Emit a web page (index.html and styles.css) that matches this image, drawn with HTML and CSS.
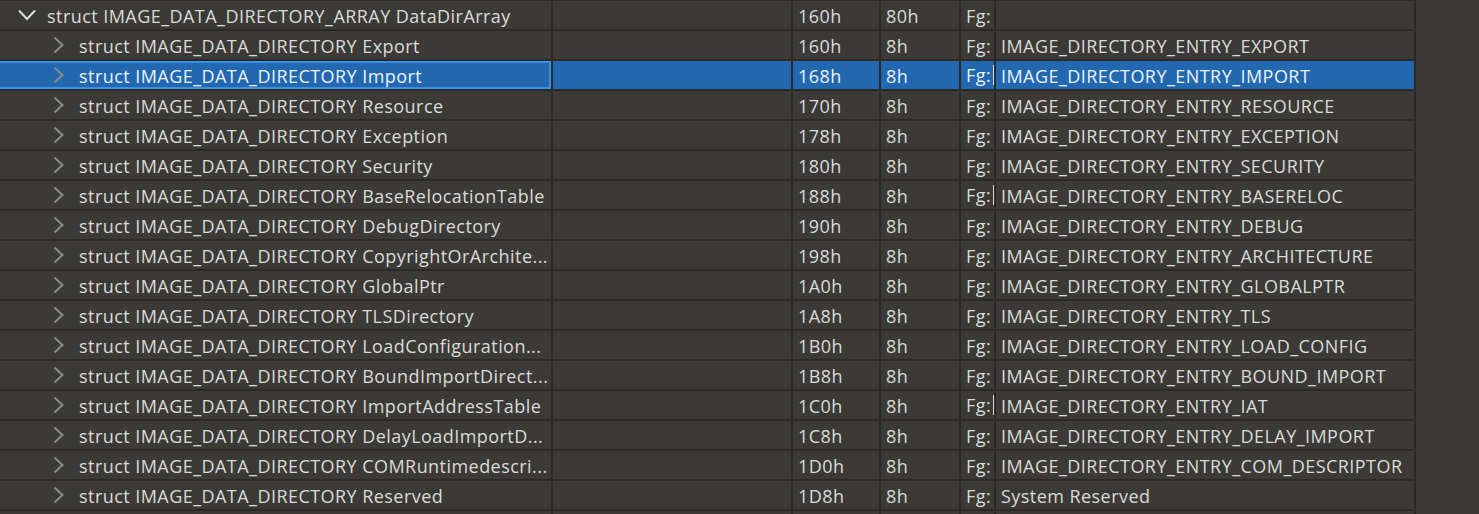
FILE: index.html
```html
<!DOCTYPE html>
<html>
<head>
<meta charset="utf-8">
<link rel="stylesheet" href="styles.css">
</head>
<body>
<div class="tree">
  <div class="row">
    <div class="cell name l0"><svg class="chev down" viewBox="0 0 18 12"><polyline points="1,1.5 9,10 17,1.5"/></svg><span class="txt">struct IMAGE_DATA_DIRECTORY_ARRAY DataDirArray</span></div>
    <div class="cell"></div><div class="cell">160h</div><div class="cell">80h</div><div class="cell">Fg:</div><div class="cell"></div>
  </div>
  <div class="row">
    <div class="cell name l1"><svg class="chev" viewBox="0 0 18 18"><polyline points="4.5,1.5 12.5,9 4.5,16.5"/></svg><span class="txt">struct IMAGE_DATA_DIRECTORY Export</span></div>
    <div class="cell"></div><div class="cell">160h</div><div class="cell">8h</div><div class="cell">Fg:</div><div class="cell">IMAGE_DIRECTORY_ENTRY_EXPORT</div>
  </div>
  <div class="row sel">
    <div class="cell name l1 focus"><svg class="chev" viewBox="0 0 18 18"><polyline points="4.5,1.5 12.5,9 4.5,16.5"/></svg><span class="txt">struct IMAGE_DATA_DIRECTORY Import</span></div>
    <div class="cell"></div><div class="cell">168h</div><div class="cell">8h</div><div class="cell fg">Fg:<span class="caret"></span></div><div class="cell">IMAGE_DIRECTORY_ENTRY_IMPORT</div>
  </div>
  <div class="row">
    <div class="cell name l1"><svg class="chev" viewBox="0 0 18 18"><polyline points="4.5,1.5 12.5,9 4.5,16.5"/></svg><span class="txt">struct IMAGE_DATA_DIRECTORY Resource</span></div>
    <div class="cell"></div><div class="cell">170h</div><div class="cell">8h</div><div class="cell">Fg:</div><div class="cell">IMAGE_DIRECTORY_ENTRY_RESOURCE</div>
  </div>
  <div class="row">
    <div class="cell name l1"><svg class="chev" viewBox="0 0 18 18"><polyline points="4.5,1.5 12.5,9 4.5,16.5"/></svg><span class="txt">struct IMAGE_DATA_DIRECTORY Exception</span></div>
    <div class="cell"></div><div class="cell">178h</div><div class="cell">8h</div><div class="cell">Fg:</div><div class="cell">IMAGE_DIRECTORY_ENTRY_EXCEPTION</div>
  </div>
  <div class="row">
    <div class="cell name l1"><svg class="chev" viewBox="0 0 18 18"><polyline points="4.5,1.5 12.5,9 4.5,16.5"/></svg><span class="txt">struct IMAGE_DATA_DIRECTORY Security</span></div>
    <div class="cell"></div><div class="cell">180h</div><div class="cell">8h</div><div class="cell">Fg:</div><div class="cell">IMAGE_DIRECTORY_ENTRY_SECURITY</div>
  </div>
  <div class="row">
    <div class="cell name l1"><svg class="chev" viewBox="0 0 18 18"><polyline points="4.5,1.5 12.5,9 4.5,16.5"/></svg><span class="txt">struct IMAGE_DATA_DIRECTORY BaseRelocationTable</span></div>
    <div class="cell"></div><div class="cell">188h</div><div class="cell">8h</div><div class="cell fg">Fg:<span class="caret"></span></div><div class="cell">IMAGE_DIRECTORY_ENTRY_BASERELOC</div>
  </div>
  <div class="row">
    <div class="cell name l1"><svg class="chev" viewBox="0 0 18 18"><polyline points="4.5,1.5 12.5,9 4.5,16.5"/></svg><span class="txt">struct IMAGE_DATA_DIRECTORY DebugDirectory</span></div>
    <div class="cell"></div><div class="cell">190h</div><div class="cell">8h</div><div class="cell">Fg:</div><div class="cell">IMAGE_DIRECTORY_ENTRY_DEBUG</div>
  </div>
  <div class="row">
    <div class="cell name l1"><svg class="chev" viewBox="0 0 18 18"><polyline points="4.5,1.5 12.5,9 4.5,16.5"/></svg><span class="txt">struct IMAGE_DATA_DIRECTORY CopyrightOrArchite...</span></div>
    <div class="cell"></div><div class="cell">198h</div><div class="cell">8h</div><div class="cell">Fg:</div><div class="cell">IMAGE_DIRECTORY_ENTRY_ARCHITECTURE</div>
  </div>
  <div class="row">
    <div class="cell name l1"><svg class="chev" viewBox="0 0 18 18"><polyline points="4.5,1.5 12.5,9 4.5,16.5"/></svg><span class="txt">struct IMAGE_DATA_DIRECTORY GlobalPtr</span></div>
    <div class="cell"></div><div class="cell">1A0h</div><div class="cell">8h</div><div class="cell">Fg:</div><div class="cell">IMAGE_DIRECTORY_ENTRY_GLOBALPTR</div>
  </div>
  <div class="row">
    <div class="cell name l1"><svg class="chev" viewBox="0 0 18 18"><polyline points="4.5,1.5 12.5,9 4.5,16.5"/></svg><span class="txt">struct IMAGE_DATA_DIRECTORY TLSDirectory</span></div>
    <div class="cell"></div><div class="cell">1A8h</div><div class="cell">8h</div><div class="cell">Fg:</div><div class="cell">IMAGE_DIRECTORY_ENTRY_TLS</div>
  </div>
  <div class="row">
    <div class="cell name l1"><svg class="chev" viewBox="0 0 18 18"><polyline points="4.5,1.5 12.5,9 4.5,16.5"/></svg><span class="txt">struct IMAGE_DATA_DIRECTORY LoadConfiguration...</span></div>
    <div class="cell"></div><div class="cell">1B0h</div><div class="cell">8h</div><div class="cell">Fg:</div><div class="cell">IMAGE_DIRECTORY_ENTRY_LOAD_CONFIG</div>
  </div>
  <div class="row">
    <div class="cell name l1"><svg class="chev" viewBox="0 0 18 18"><polyline points="4.5,1.5 12.5,9 4.5,16.5"/></svg><span class="txt">struct IMAGE_DATA_DIRECTORY BoundImportDirect...</span></div>
    <div class="cell"></div><div class="cell">1B8h</div><div class="cell">8h</div><div class="cell">Fg:</div><div class="cell">IMAGE_DIRECTORY_ENTRY_BOUND_IMPORT</div>
  </div>
  <div class="row">
    <div class="cell name l1"><svg class="chev" viewBox="0 0 18 18"><polyline points="4.5,1.5 12.5,9 4.5,16.5"/></svg><span class="txt">struct IMAGE_DATA_DIRECTORY ImportAddressTable</span></div>
    <div class="cell"></div><div class="cell">1C0h</div><div class="cell">8h</div><div class="cell fg">Fg:<span class="caret"></span></div><div class="cell">IMAGE_DIRECTORY_ENTRY_IAT</div>
  </div>
  <div class="row">
    <div class="cell name l1"><svg class="chev" viewBox="0 0 18 18"><polyline points="4.5,1.5 12.5,9 4.5,16.5"/></svg><span class="txt">struct IMAGE_DATA_DIRECTORY DelayLoadImportD...</span></div>
    <div class="cell"></div><div class="cell">1C8h</div><div class="cell">8h</div><div class="cell">Fg:</div><div class="cell">IMAGE_DIRECTORY_ENTRY_DELAY_IMPORT</div>
  </div>
  <div class="row">
    <div class="cell name l1"><svg class="chev" viewBox="0 0 18 18"><polyline points="4.5,1.5 12.5,9 4.5,16.5"/></svg><span class="txt">struct IMAGE_DATA_DIRECTORY COMRuntimedescri...</span></div>
    <div class="cell"></div><div class="cell">1D0h</div><div class="cell">8h</div><div class="cell">Fg:</div><div class="cell">IMAGE_DIRECTORY_ENTRY_COM_DESCRIPTOR</div>
  </div>
  <div class="row">
    <div class="cell name l1"><svg class="chev" viewBox="0 0 18 18"><polyline points="4.5,1.5 12.5,9 4.5,16.5"/></svg><span class="txt">struct IMAGE_DATA_DIRECTORY Reserved</span></div>
    <div class="cell"></div><div class="cell">1D8h</div><div class="cell">8h</div><div class="cell">Fg:</div><div class="cell">System Reserved</div>
  </div>
  <div class="row">
    <div class="cell name"></div><div class="cell"></div><div class="cell"></div><div class="cell"></div><div class="cell"></div><div class="cell"></div>
  </div>
</div>
</body>
</html>
```
FILE: styles.css
```css
html, body {
  margin: 0;
  padding: 0;
  background: #3c3a36;
  overflow: hidden;
}
body {
  font-family: "Open Sans", "Noto Sans", "Liberation Sans", sans-serif;
  font-size: 18px;
  letter-spacing: 0.45px;
  color: #dadad8;
}
.tree {
  width: 1416px;
  border-top: 1px solid #2b2a27;
}
.row {
  display: grid;
  grid-template-columns: 553px 240px 88px 80px 35px 420px;
  height: 30px;
  box-sizing: border-box;
  border-bottom: 2px solid #2b2a27;
}
.cell {
  box-sizing: border-box;
  height: 28px;
  line-height: 30px;
  padding-left: 5px;
  border-right: 2px solid #2b2a27;
  white-space: nowrap;
  overflow: hidden;
}
.name {
  display: flex;
  align-items: center;
  padding-left: 0;
}
.name.l0 { padding-left: 18px; }
.name.l1 { padding-left: 50px; }
.txt {
  margin-top: 2px;
  overflow: hidden;
  white-space: nowrap;
}
.chev {
  flex: none;
  width: 18px;
  height: 18px;
  margin-right: 11px;
  fill: none;
  stroke: #8a8a88;
  stroke-width: 2;
}
.chev.down {
  height: 12px;
  stroke: #dcdcda;
}
.sel .cell {
  background: #2168b0;
  color: #eef2f8;
}
.sel .focus {
  box-shadow: inset 0 2px 0 #3b8fe6, inset 0 -2px 0 #3b8fe6, inset -2px 0 0 #3b8fe6;
}
.fg {
  display: flex;
  align-items: center;
  padding-right: 0;
}
.caret {
  width: 1px;
  height: 20px;
  margin-left: auto;
  background: #d8d8d6;
}
```
